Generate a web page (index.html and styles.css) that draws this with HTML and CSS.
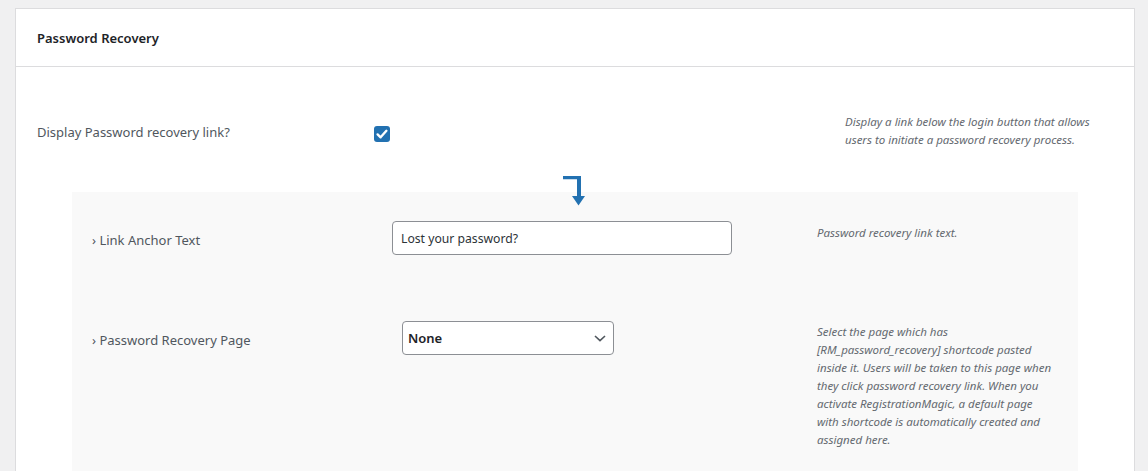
FILE: index.html
```html
<!DOCTYPE html>
<html lang="en">
<head>
<meta charset="utf-8">
<title>Password Recovery</title>
<link rel="stylesheet" href="styles.css">
</head>
<body>
<div class="card">
  <div class="card-head">Password Recovery</div>
  <div class="card-body">
    <div class="row row-main">
      <div class="label label-main">Display Password recovery link?</div>
      <div class="control"><span class="checkbox"><svg viewBox="0 0 16 16" width="16" height="16"><path d="M3.6 8.4 L6.6 11.3 L12.4 4.8" fill="none" stroke="#fff" stroke-width="2.4" stroke-linecap="round" stroke-linejoin="round"/></svg></span></div>
      <div class="desc desc-main">Display a link below the login button that allows users to initiate a password recovery process.</div>
    </div>
    <div class="subpanel">
      <div class="arrow"><svg viewBox="0 0 23 30" width="23" height="30"><path d="M0 0 H18 V21 H14 V3.2 H0 Z" fill="#2271b1"/><path d="M9 20 H22 L15.5 29.5 Z" fill="#2271b1"/></svg></div>
      <div class="row row-sub row-first">
        <div class="label label-sub">› Link Anchor Text</div>
        <div class="control"><input class="text-input" type="text" value="Lost your password?"></div>
        <div class="desc desc-sub">Password recovery link text.</div>
      </div>
      <div class="row row-sub row-second">
        <div class="label label-sub">› Password Recovery Page</div>
        <div class="control"><div class="select"><span>None</span><svg viewBox="0 0 12 7" width="12" height="7"><path d="M1 1 L6 5.6 L11 1" fill="none" stroke="#50575e" stroke-width="1.6"/></svg></div></div>
        <div class="desc desc-sub desc-long">Select the page which has [RM_password_recovery] shortcode pasted inside it. Users will be taken to this page when they click password recovery link. When you activate RegistrationMagic, a default page with shortcode is automatically created and assigned here.</div>
      </div>
    </div>
  </div>
</div>
</body>
</html>
```
FILE: styles.css
```css
html, body {
  margin: 0;
  padding: 0;
}
body {
  background: #f0f0f1;
  font-family: "Noto Sans", "Open Sans", sans-serif;
  color: #50575e;
  padding: 8px 0 0 15px;
  height: 463px;
  overflow: hidden;
}
.card {
  width: 1118px;
  background: #fff;
  border: 1px solid #dcdcde;
  border-bottom: none;
  min-height: 470px;
}
.card-head {
  height: 58px;
  box-sizing: border-box;
  padding: 20px 0 0 21px;
  font-size: 13px;
  font-weight: 600;
  color: #1d2327;
  line-height: 18px;
  border-bottom: 1px solid #dcdcde;
}
.row {
  display: grid;
  align-items: start;
}
.row-main {
  grid-template-columns: 337px 471px 1fr;
  padding: 46px 0 0 21px;
  margin-bottom: 43px;
}
.label {
  font-size: 13px;
  line-height: 20px;
  color: #50575e;
}
.label-main { margin-top: 9px; }
.checkbox {
  display: block;
  width: 16px;
  height: 16px;
  margin-top: 13px;
  background: #2271b1;
  border-radius: 3px;
}
.checkbox svg { display: block; }
.desc {
  font-size: 11.5px;
  line-height: 18px;
  font-style: italic;
  color: #646970;
}
.desc-main { width: 262px; }
.subpanel {
  display: flow-root;
  margin: 0 56px;
  background: #f9f9f9;
  padding-bottom: 40px;
}
.arrow {
  margin: -16px 0 0 491px;
  height: 30px;
}
.arrow svg { display: block; }
.row-sub {
  grid-template-columns: 300px 425px 1fr;
  padding-left: 20px;
}
.row-first { padding-top: 15px; }
.row-second { padding-top: 66px; }
.label-sub { margin-top: 9px; }
.text-input {
  display: block;
  box-sizing: border-box;
  width: 340px;
  height: 34px;
  margin: 0;
  padding: 0 8px;
  border: 1px solid #8c8f94;
  border-radius: 4px;
  background: #fff;
  font-family: inherit;
  font-size: 12.2px;
  color: #2c3338;
}
.select {
  box-sizing: border-box;
  width: 212px;
  height: 34px;
  margin-left: 10px;
  padding: 0 7px 0 5px;
  border: 1px solid #8c8f94;
  border-radius: 4px;
  background: #fff;
  display: flex;
  align-items: center;
  justify-content: space-between;
  font-size: 13px;
  font-weight: 600;
  color: #1d2327;
}
.select svg { display: block; }
.desc-sub { margin-top: 3px; }
.desc-long { width: 240px; margin-top: 2px; }
```
